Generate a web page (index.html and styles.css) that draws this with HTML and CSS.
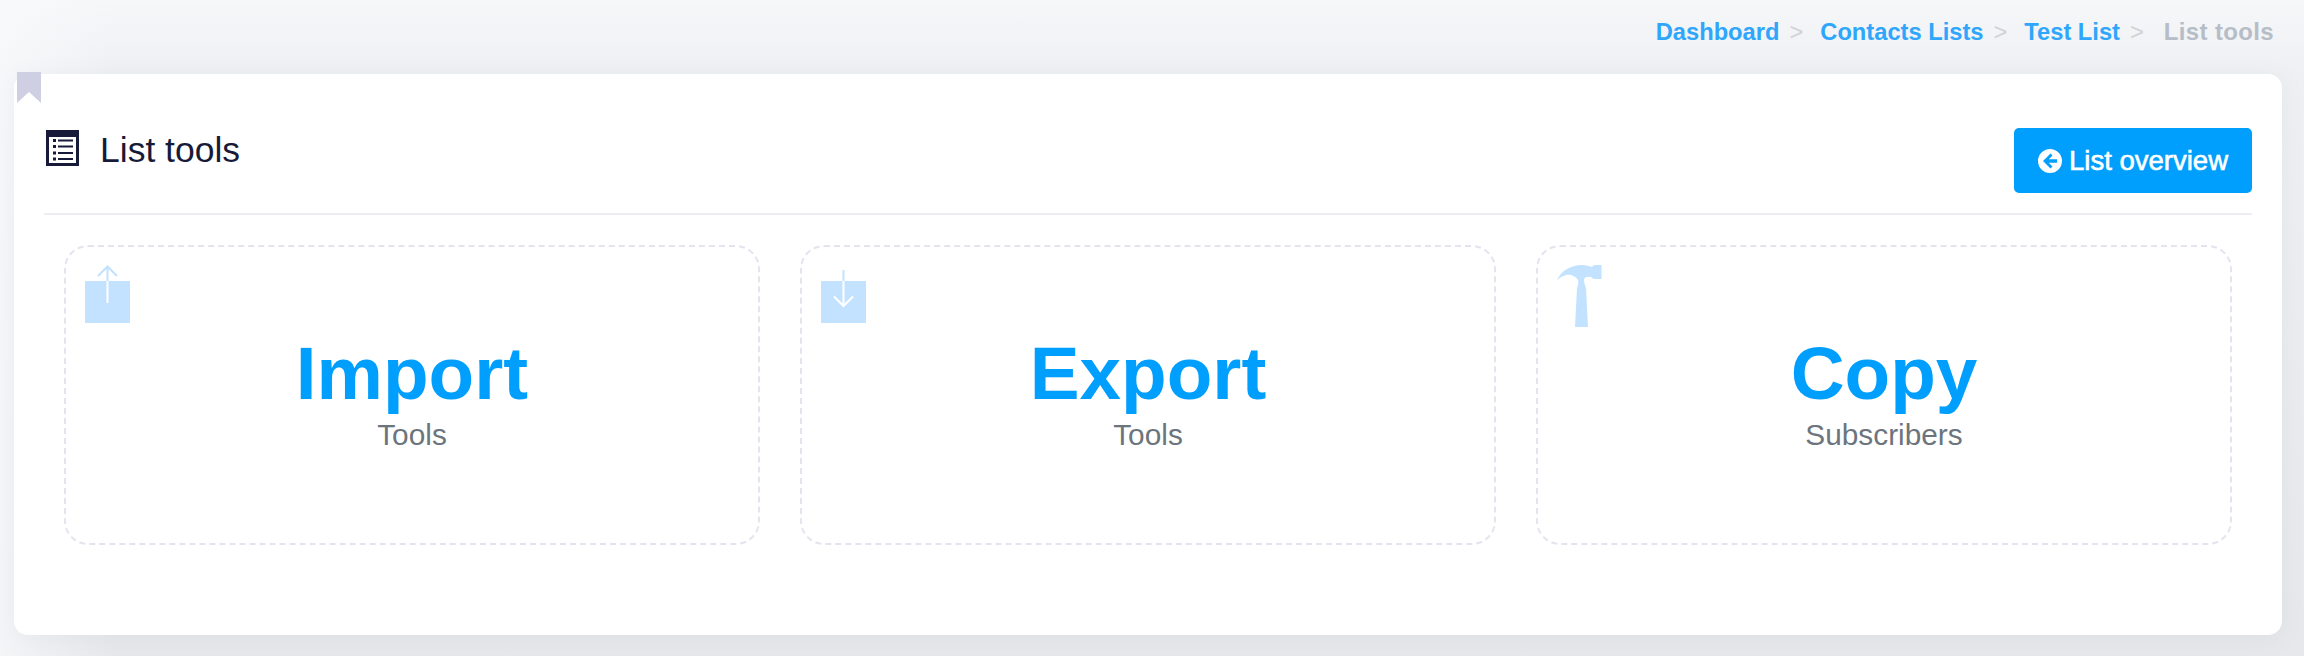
FILE: index.html
```html
<!DOCTYPE html>
<html>
<head>
    <title>List tools</title>
    <link rel="stylesheet" href="styles.css">
</head>
<body>
    <div class="breadcrumb">
        <a href="#">Dashboard</a><span class="sep">&gt;</span>
        <a href="#">Contacts Lists</a><span class="sep">&gt;</span>
        <a href="#">Test List</a><span class="sep sep-last">&gt;</span>
        <span class="current">List tools</span>
    </div>

    <div class="panel">
        <svg class="bookmark" width="24" height="31" viewBox="0 0 24 31"><path d="M0 0H24V31L12 20L0 31Z"/></svg>

        <div class="panel-header">
            <h1 class="panel-title">
                <svg class="title-icon" width="33" height="36" viewBox="0 0 33 36">
                    <path fill-rule="evenodd" d="M0 0H33V36H0ZM3 7V33H30V7Z"/>
                    <path d="M7 9H10V12H7ZM12 9.500H27V11.500H12ZM7 15H10V18H7ZM12 15.500H27V17.500H12ZM7 21.500H10V24.500H7ZM12 22H27V24H12ZM7 27.500H10V30.500H7ZM12 28H27V30H12Z"/>
                </svg>
                <span class="title-text">List tools</span>
            </h1>
            <a class="btn" href="#">
                <svg width="24" height="24" viewBox="0 0 24 24">
                    <path fill-rule="evenodd" d="M12 0A12 12 0 1 1 12 24A12 12 0 1 1 12 0ZM12.500 4.500L5 12L12.500 19.500L14.500 17.500L10.800 13.800H19V10.200H10.800L14.500 6.500Z"/>
                </svg>
                List overview
            </a>
        </div>

        <div class="tools">
            <a class="tool" href="#">
                <svg class="tool-icon" width="45" height="63" viewBox="0 0 45 63">
                    <rect y="16" width="45" height="42"/>
                    <path class="line-up" d="M13 11L22.500 1.500L32 11M22.500 2V16"/>
                    <path class="line-white" d="M22.500 16V38"/>
                </svg>
                <div class="tool-name">Import</div>
                <div class="tool-sub">Tools</div>
            </a>
            <a class="tool" href="#">
                <svg class="tool-icon" width="45" height="63" viewBox="0 0 45 63">
                    <rect y="16" width="45" height="42"/>
                    <path class="line-up" d="M22.500 5V16"/>
                    <path class="line-white" d="M22.500 16V41M13 31.500L22.500 41L32 31.500"/>
                </svg>
                <div class="tool-name">Export</div>
                <div class="tool-sub">Tools</div>
            </a>
            <a class="tool" href="#">
                <svg class="tool-icon" width="45" height="63" viewBox="28 35 45 63">
                    <path d="M28 50.500C31 42 41 35 53 35C57 35 60 36 63 37L65 35H72.500V49H65L62 47C58 46 55 47 55 50C55 53 56 55 57 58L59 97H46L48 58C49 55 50 52 49 50C47 46 41 44 37 45C33 46 30 48 28 50.500Z"/>
                </svg>
                <div class="tool-name">Copy</div>
                <div class="tool-sub">Subscribers</div>
            </a>
        </div>
    </div>
</body>
</html>
```

FILE: styles.css
```css
body {
    font-family: "Liberation Sans", Arial, sans-serif;
    background:
        linear-gradient(90deg, rgba(250,251,252,0.7), rgba(250,251,252,0) 5%),
        linear-gradient(180deg, #f6f7f9 0%, #eef0f3 11%, #e6e8eb 100%);
    margin: 0;
    height: 656px;
    overflow: hidden;
}
a {
    text-decoration: none;
}
.breadcrumb {
    display: flex;
    justify-content: flex-end;
    height: 48px;
    padding: 17px 30px 0 0;
    box-sizing: border-box;
    margin-bottom: 26px;
    font-size: 23.7px;
    line-height: 30px;
    font-weight: bold;
}
.breadcrumb a {
    color: #2ea6fb;
}
.breadcrumb .sep {
    color: #cfd2d6;
    font-weight: normal;
    margin: 0 17px 0 10px;
}
.breadcrumb .sep-last {
    margin-right: 20px;
}
.breadcrumb .current {
    color: #b6bdc7;
    font-size: 24px;
    letter-spacing: 0.35px;
}
.panel {
    position: relative;
    margin: 0 22px 0 14px;
    height: 561px;
    padding: 0 30px;
    box-sizing: border-box;
    background: white;
    border-radius: 14px;
    box-shadow: 0 4px 24px rgba(120,130,150,0.08);
}
.bookmark {
    position: absolute;
    top: -2px;
    left: 3px;
    fill: #cfcfe3;
}
.panel-header {
    display: flex;
    justify-content: space-between;
    align-items: flex-start;
    padding-top: 54px;
    padding-bottom: 20px;
    border-bottom: 2px solid #ebedf0;
}
.panel-title {
    display: flex;
    align-items: center;
    gap: 21px;
    margin: 0;
    padding-left: 2px;
    font-size: 35.5px;
    line-height: 36px;
    font-weight: normal;
    color: #171a38;
}
.title-text {
    padding-top: 4px;
}
.title-icon {
    fill: #171a38;
}
.btn {
    display: flex;
    align-items: center;
    gap: 7px;
    height: 65px;
    padding: 0 24px;
    box-sizing: border-box;
    background-color: #009ffd;
    border-radius: 5px;
    color: white;
    font-size: 27.5px;
    -webkit-text-stroke: 0.6px white;
}
.btn svg {
    fill: white;
}
.tools {
    display: grid;
    grid-template-columns: repeat(3, 1fr);
    gap: 40px;
    margin-top: 30px;
    padding: 0 20px;
}
.tool {
    position: relative;
    display: block;
    height: 300px;
    box-sizing: border-box;
    padding-top: 89px;
    border: 2px dashed #e4e4f0;
    border-radius: 24px;
    text-align: center;
}
.tool-icon {
    position: absolute;
    top: 18px;
    left: 19px;
    fill: #c2e2ff;
}
.line-up, .line-white {
    fill: none;
    stroke-width: 2;
}
.line-up {
    stroke: #c2e2ff;
}
.line-white {
    stroke: white;
}
.tool-name {
    font-size: 74.7px;
    line-height: 74px;
    font-weight: bold;
    color: #009ffd;
}
.tool-sub {
    margin-top: 11px;
    font-size: 29.8px;
    line-height: 28px;
    color: #6c757d;
}
```
